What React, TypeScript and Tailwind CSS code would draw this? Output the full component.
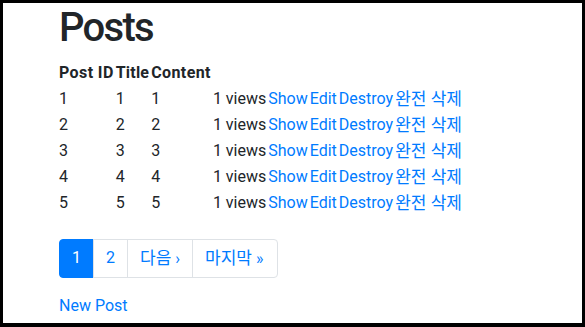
const rows = [1, 2, 3, 4, 5];

export default function App() {
  return (
    <div
      className="h-[327px] w-[585px] overflow-hidden border-t-[3px] border-l-[3px] border-r-[3px] border-b-4 border-black bg-white text-[16px] leading-6 text-[#212529]"
      style={{ fontFamily: 'Roboto, "Noto Sans CJK KR", sans-serif' }}
    >
      <div className="pl-[56px]">
        <h1 className="mb-2 pt-px text-[40px] font-medium leading-[48px] tracking-[-1.7px]">Posts</h1>
        <table className="-mx-[2px] border-separate border-spacing-[2px] -mt-[1px]">
          <thead>
            <tr>
              <th className="p-0 text-left font-bold tracking-[0.4px]">Post ID</th>
              <th className="p-0 text-left font-bold tracking-[0.2px]">Title</th>
              <th className="p-0 text-left font-bold tracking-[0.4px]">Content</th>
              <th colSpan={5}></th>
            </tr>
          </thead>
          <tbody>
            {rows.map((n) => (
              <tr key={n}>
                <td className="p-0">{n}</td>
                <td className="p-0">{n}</td>
                <td className="p-0">{n}</td>
                <td className="p-0">1 views</td>
                <td className="p-0 text-[#007bff]">Show</td>
                <td className="p-0 text-[#007bff]">Edit</td>
                <td className="p-0 text-[#007bff]">Destroy</td>
                <td className="p-0 text-[17px] text-[#007bff]">완전 삭제</td>
              </tr>
            ))}
          </tbody>
        </table>
        <ul className="mt-[22px] mb-4 flex leading-5">
          <li className="rounded-l border border-[#007bff] bg-[#007bff] px-3 py-2 text-white">1</li>
          <li className="-ml-px border border-[#dee2e6] px-3 py-2 text-[#007bff]">2</li>
          <li className="-ml-px border border-[#dee2e6] px-3 py-2 text-[#007bff]">
            <span className="text-[17px]">다음</span> ›
          </li>
          <li className="-ml-px rounded-r border border-[#dee2e6] py-2 pl-3 pr-[14px] text-[#007bff]">
            <span className="text-[17px]">마지막</span> »
          </li>
        </ul>
        <div className="text-[#007bff]">New Post</div>
      </div>
    </div>
  );
}
